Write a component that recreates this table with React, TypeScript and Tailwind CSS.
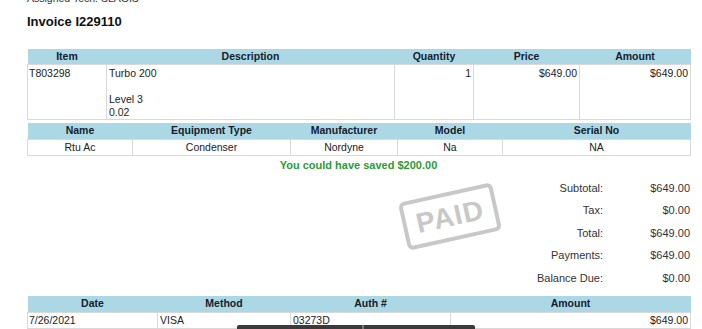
const lines = [
  { id: 'T803298', desc: ['Turbo 200', '', 'Level 3', '0.02'], qty: '1', price: '$649.00', amount: '$649.00' },
];

const equipment = [{ name: 'Rtu Ac', type: 'Condenser', maker: 'Nordyne', model: 'Na', serial: 'NA' }];

const totals = [
  ['Subtotal:', '$649.00'],
  ['Tax:', '$0.00'],
  ['Total:', '$649.00'],
  ['Payments:', '$649.00'],
  ['Balance Due:', '$0.00'],
];

const payments = [{ date: '7/26/2021', method: 'VISA', auth: '03273D', amount: '$649.00' }];

const th = 'h-[15px] p-0 text-center font-bold text-[10.5px] leading-[15px] text-[#15202b]';
const td = 'border border-[#d9d9d9] px-[2px] py-0 text-[10.5px] leading-[13px] text-[#222]';

export default function App() {
  return (
    <div
      className="relative w-[702px] h-[329px] overflow-hidden bg-white"
      style={{ fontFamily: '"Liberation Sans", Arial, sans-serif' }}
    >
      <div className="w-[663px] ml-[27px]">
        <div className="-mt-[8px] h-[13px] text-[10.5px] leading-[13px] text-[#333]">Assigned Tech: SLAGIS</div>

        <h1 className="mt-[9px] text-[13px] leading-[15px] font-bold text-[#111]">Invoice I229110</h1>

        <table className="mt-[20px] w-full table-fixed border-collapse">
          <colgroup>
            <col className="w-[79px]" />
            <col className="w-[288px]" />
            <col className="w-[79px]" />
            <col className="w-[106px]" />
            <col className="w-[111px]" />
          </colgroup>
          <thead>
            <tr className="bg-[#acd8e6]">
              <th className={th}>Item</th>
              <th className={th}>Description</th>
              <th className={th}>Quantity</th>
              <th className={th}>Price</th>
              <th className={th}>Amount</th>
            </tr>
          </thead>
          <tbody>
            {lines.map((l) => (
              <tr key={l.id} className="h-[55px] align-top">
                <td className={`${td} !pl-[1px] pt-[2px]`}>{l.id}</td>
                <td className={`${td} pt-[2px]`}>
                  {l.desc.map((d, i) => (
                    <div key={i} className="h-[13px]">{d}</div>
                  ))}
                </td>
                <td className={`${td} text-right pt-[2px]`}>{l.qty}</td>
                <td className={`${td} text-right pt-[2px]`}>{l.price}</td>
                <td className={`${td} text-right pt-[2px]`}>{l.amount}</td>
              </tr>
            ))}
          </tbody>
        </table>

        <table className="mt-[3px] w-full table-fixed border-collapse">
          <colgroup>
            <col className="w-[105px]" />
            <col className="w-[158px]" />
            <col className="w-[107px]" />
            <col className="w-[105px]" />
            <col className="w-[188px]" />
          </colgroup>
          <thead>
            <tr className="bg-[#acd8e6]">
              <th className={`${th} h-[16px]`}>Name</th>
              <th className={`${th} h-[16px]`}>Equipment Type</th>
              <th className={`${th} h-[16px]`}>Manufacturer</th>
              <th className={`${th} h-[16px]`}>Model</th>
              <th className={`${th} h-[16px]`}>Serial No</th>
            </tr>
          </thead>
          <tbody>
            {equipment.map((e) => (
              <tr key={e.name} className="h-[16px] text-center">
                <td className={td}>{e.name}</td>
                <td className={td}>{e.type}</td>
                <td className={td}>{e.maker}</td>
                <td className={td}>{e.model}</td>
                <td className={td}>{e.serial}</td>
              </tr>
            ))}
          </tbody>
        </table>

        <p className="mt-[3px] text-center text-[11px] leading-[12px] font-bold text-[#2b9b34]">
          You could have saved $200.00
        </p>

        <div className="relative mt-[6px]">
          {totals.map(([label, value]) => (
            <div key={label} className="flex h-[22.5px] items-center justify-end text-[11px] text-[#333]">
              <span className="text-right">{label}</span>
              <span className="w-[87px] text-right">{value}</span>
            </div>
          ))}
          <div className="absolute left-[375px] top-[15px] flex h-[49px] w-[96px] -rotate-[12.5deg] items-center justify-center rounded-[6px] border-[4px] border-[#c8c8c8]">
            <span className="text-[28px] leading-none font-bold tracking-[1px] text-[#c8c8c8]">PAID</span>
          </div>
        </div>

        <table className="mt-[7px] w-full table-fixed border-collapse">
          <colgroup>
            <col className="w-[130px]" />
            <col className="w-[133px]" />
            <col className="w-[160px]" />
            <col className="w-[240px]" />
          </colgroup>
          <thead>
            <tr className="bg-[#acd8e6]">
              <th className={`${th} h-[16px]`}>Date</th>
              <th className={`${th} h-[16px]`}>Method</th>
              <th className={`${th} h-[16px]`}>Auth #</th>
              <th className={`${th} h-[16px]`}>Amount</th>
            </tr>
          </thead>
          <tbody>
            {payments.map((p) => (
              <tr key={p.date} className="h-[16px]">
                <td className={`${td} !pl-[1px]`}>{p.date}</td>
                <td className={td}>{p.method}</td>
                <td className={td}>{p.auth}</td>
                <td className={`${td} text-right`}>{p.amount}</td>
              </tr>
            ))}
          </tbody>
        </table>
      </div>

      <div className="absolute bottom-0 left-[237px] flex h-[4px] w-[238px] rounded-t-[2px] bg-[#3a3a3a]">
        <div className="ml-[125px] w-[2px] bg-[#777]" />
      </div>
    </div>
  );
}
